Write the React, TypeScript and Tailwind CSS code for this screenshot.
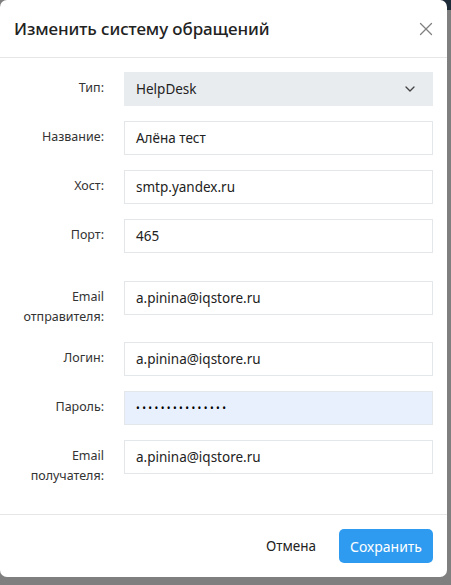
import { ChevronDown, X } from "lucide-react";

type Field = {
  label: string[];
  value: string;
  kind?: "select" | "password";
  extraTop?: boolean;
};

const fields: Field[] = [
  { label: ["Тип:"], value: "HelpDesk", kind: "select" },
  { label: ["Название:"], value: "Алёна тест" },
  { label: ["Хост:"], value: "smtp.yandex.ru" },
  { label: ["Порт:"], value: "465" },
  { label: ["Email", "отправителя:"], value: "a.pinina@iqstore.ru", extraTop: true },
  { label: ["Логин:"], value: "a.pinina@iqstore.ru" },
  { label: ["Пароль:"], value: "•••••••••••••••", kind: "password" },
  { label: ["Email", "получателя:"], value: "a.pinina@iqstore.ru" },
];

const FieldRow = ({ field }: { field: Field }) => {
  const box =
    field.kind === "select"
      ? "bg-[#e9ecef] border-[#e9ecef]"
      : field.kind === "password"
        ? "bg-[#e8f0fe] border-[#e4e7ea]"
        : "bg-white border-[#e4e7ea]";
  return (
    <div className={`flex items-start ${field.extraTop ? "mt-[28px]" : "mt-[15px]"} first:mt-0`}>
      <div className="w-[91px] shrink-0 pt-[6px] text-right text-[12.5px] leading-[20px] text-[#333]">
        {field.label.map((l) => (
          <div key={l}>{l}</div>
        ))}
      </div>
      <div
        className={`ml-[20px] flex h-[34px] flex-1 items-center justify-between border px-[11px] text-[13.5px] text-[#222] ${box}`}
      >
        {field.kind === "password" ? (
          <span className="text-[10px] tracking-[2.4px] text-black">{field.value}</span>
        ) : (
          <span>{field.value}</span>
        )}
        {field.kind === "select" && (
          <ChevronDown size={16} strokeWidth={2} className="mr-[3px] text-[#444]" />
        )}
      </div>
    </div>
  );
};

export default function App() {
  return (
    <div
      className="relative h-[585px] w-[451px] overflow-hidden bg-[#7f7f7f]"
      style={{ fontFamily: '"Noto Sans", "Open Sans", sans-serif' }}
    >
      {/* dark page header peeking behind the overlay */}
      <div className="absolute right-0 top-0 h-[10px] w-[10px] bg-[#1d2a38]" />

      <div className="relative flex h-[577px] w-[447px] flex-col rounded-[7px] bg-white">
        {/* header */}
        <div className="flex h-[58px] items-center justify-between border-b border-[#e6e6e6] pl-[14px] pr-[10px]">
          <h2 className="text-[17px] font-medium tracking-[-0.1px] text-[#222]">
            Изменить систему обращений
          </h2>
          <X size={22} strokeWidth={1.4} className="text-[#808080]" />
        </div>

        {/* body */}
        <div className="flex-1 pl-[13px] pr-[14px] pt-[14px]">
          {fields.map((f) => (
            <FieldRow key={f.label.join(" ")} field={f} />
          ))}
        </div>

        {/* footer */}
        <div className="flex h-[63px] items-center justify-end gap-[23px] border-t border-[#e6e6e6] pr-[14px]">
          <button className="text-[13.5px] text-[#222]">Отмена</button>
          <button className="h-[34px] rounded-[5px] bg-[#2e9bf0] px-[11px] text-[14px] text-white">
            Сохранить
          </button>
        </div>
      </div>
    </div>
  );
}
